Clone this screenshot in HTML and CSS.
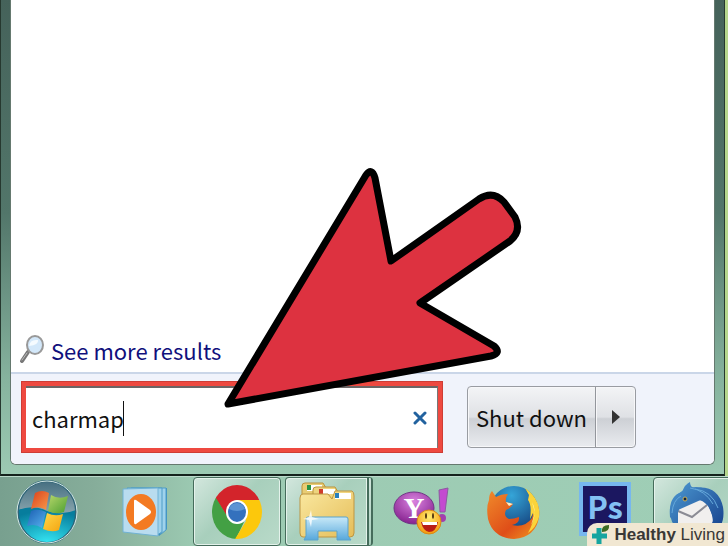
FILE: index.html
```
<!DOCTYPE html>
<html lang="en">
<head>
    <meta charset="UTF-8">
    <meta name="viewport" content="width=device-width, initial-scale=1.0">
    <title>Start Menu</title>
    <link rel="stylesheet" href="styles.css">
</head>
<body>
    <main class="start-frame">
        <div class="start-menu">
            <div class="results">
                <a class="more-link" href="#results">
                    <svg width="26" height="30" viewBox="0 0 26 30" aria-hidden="true">
                        <path d="M9 17 L3 26" stroke="#777" stroke-width="4" stroke-linecap="round"/>
                        <path d="M8 18 L3 25" stroke="#bbb" stroke-width="1" stroke-linecap="round"/>
                        <ellipse cx="16" cy="10" rx="8" ry="9" fill="#d3e8fa" stroke="#999" stroke-width="2"/>
                        <path d="M10 11 Q11 4 19 5 Q20 10 10 11Z" fill="#f5fbff"/>
                    </svg>
                    <span>See more results</span>
                </a>
            </div>
            <div class="search-row">
                <div class="search-box">
                    <div class="search-inner">
                        <input class="search-input" type="text" value="charmap" aria-label="Search programs and files">
                        <span class="caret"></span>
                        <button class="clear-btn" type="button" aria-label="Clear search">
                            <svg width="14" height="16" viewBox="0 0 14 16"><path d="M2 3 L12 13 M12 3 L2 13" stroke="#22629f" stroke-width="3" stroke-linecap="round"/></svg>
                        </button>
                    </div>
                </div>
                <div class="shutdown">
                    <button class="shutdown-btn" type="button">Shut down</button>
                    <button class="shutdown-more" type="button" aria-label="More power options">
                        <svg width="8" height="14" viewBox="0 0 8 14"><path d="M0 0 L8 7 L0 14Z" fill="#333"/></svg>
                    </button>
                </div>
            </div>
        </div>
    </main>

    <nav class="taskbar">
        <button class="orb" type="button" aria-label="Start">
            <svg width="62" height="64" viewBox="0 0 62 64">
                <defs>
                    <linearGradient id="orbTop" x1="0" y1="0" x2="0" y2="1"><stop offset="0" stop-color="#456e80"/><stop offset="1" stop-color="#c7d8d8"/></linearGradient>
                    <radialGradient id="orbLow" cx=".5" cy="1" r=".9"><stop offset="0" stop-color="#35e7f4"/><stop offset="1" stop-color="#077d9d"/></radialGradient>
                    <linearGradient id="wRed" x1="0" y1="0" x2="1" y2="1"><stop offset="0" stop-color="#d9401c"/><stop offset="1" stop-color="#f99a4a"/></linearGradient>
                    <linearGradient id="wGreen" x1="0" y1="0" x2="1" y2="1"><stop offset="0" stop-color="#b6d66a"/><stop offset="1" stop-color="#4b9e31"/></linearGradient>
                    <linearGradient id="wBlue" x1="0" y1="0" x2="1" y2="1"><stop offset="0" stop-color="#1b5fb2"/><stop offset="1" stop-color="#58b4f0"/></linearGradient>
                    <linearGradient id="wYellow" x1="0" y1="0" x2="1" y2="1"><stop offset="0" stop-color="#ffd84a"/><stop offset="1" stop-color="#f4a30f"/></linearGradient>
                </defs>
                <ellipse cx="31" cy="32" rx="29" ry="31" fill="url(#orbTop)"/>
                <path d="M2 30 Q18 24 31 31 Q46 36 60 30 Q61 48 47 58 Q31 68 15 58 Q1 48 2 30Z" fill="url(#orbLow)"/>
                <ellipse cx="31" cy="32" rx="29" ry="31" fill="none" stroke="#2d6477" stroke-width="2"/>
                <ellipse cx="31" cy="32" rx="30" ry="31" fill="none" stroke="#d7e9e6"/>
                <path d="M19 13 Q26 9 33 13 L30 30 Q23 25 15 29Z" fill="url(#wRed)"/>
                <path d="M35 15 Q43 20 52 16 L48 32 Q40 35 32 31Z" fill="url(#wGreen)"/>
                <path d="M15 31 Q22 28 30 32 L26 48 Q19 43 11 46Z" fill="url(#wBlue)"/>
                <path d="M31 33 Q39 37 47 34 L43 50 Q36 53 27 49Z" fill="url(#wYellow)"/>
            </svg>
        </button>

        <button class="task" type="button" aria-label="Media Player">
            <svg width="48" height="52" viewBox="0 0 48 52">
                <path d="M12 2 H46 V43 L38 50 Z" fill="#3c8fc0"/>
                <path d="M10 2 H45 V44 L40 48Z" fill="#9fd2ec" stroke="#4f9cc6"/>
                <path d="M6 2 H41 V46 L36 49Z" fill="#9fd2ec" stroke="#4f9cc6"/>
                <path d="M2 3 L37 2 V50 L2 46Z" fill="#b9dcef" stroke="#70b2d4"/>
                <ellipse cx="20" cy="26" rx="15" ry="18" fill="#f37a22"/>
                <path d="M13 15 Q13 13 15 14 L29 24 Q31 26 29 28 L15 38 Q13 39 13 36Z" fill="#fff"/>
            </svg>
        </button>

        <button class="task task-open" type="button" aria-label="Chrome">
            <svg width="50" height="54" viewBox="0 0 50 54">
                <defs><clipPath id="disc"><ellipse cx="25" cy="27" rx="25" ry="27"/></clipPath></defs>
                <g clip-path="url(#disc)">
                    <path d="M0 0 H50 V15 H25 L14 30 L4 14Z" fill="#d3242b"/>
                    <path d="M4 13 L15 31 L25 39 L32 37 L23 56 H0 V13Z" fill="#43a044"/>
                    <path d="M25 15 H50 V54 H23 L34 36Z" fill="#fcc80c"/>
                </g>
                <ellipse cx="25" cy="27" rx="11" ry="12" fill="#fff"/>
                <ellipse cx="25" cy="27" rx="9" ry="10" fill="#3471bd"/>
                <path d="M17 24 Q19 18 25 18 Q31 18 33 24 Q25 28 17 24Z" fill="#5c94d3"/>
            </svg>
        </button>

        <button class="task task-open task-stack" type="button" aria-label="File Explorer">
            <svg width="56" height="60" viewBox="0 0 56 60">
                <defs>
                    <linearGradient id="folder" x1="0" y1="0" x2="1" y2="1"><stop offset="0" stop-color="#fae8a0"/><stop offset="1" stop-color="#e5bd58"/></linearGradient>
                    <linearGradient id="tray" x1="0" y1="0" x2="0" y2="1"><stop offset="0" stop-color="#c8e9f8"/><stop offset="1" stop-color="#57a8dc"/></linearGradient>
                </defs>
                <path d="M3 16 V4 Q3 1 6 1 H24 L27 6 V20Z" fill="#e8cc74" stroke="#b9933c"/>
                <path d="M8 3 H23 V9 H8Z" fill="#fff"/><path d="M8 3 H12 V8 H8Z" fill="#279343"/>
                <path d="M14 18 V8 Q14 5 17 5 H36 L39 10 H51 V20Z" fill="#eed47e" stroke="#b9933c"/>
                <path d="M20 7 H36 V12 H20Z" fill="#fff"/><path d="M20 7 H24 V12 H20Z" fill="#cf3c2c"/>
                <path d="M1 16 Q1 12 4 12 H29 L33 17 L36 9 H53 Q55 10 55 14 V51 Q55 55 51 55 H4 Q1 55 1 51Z" fill="url(#folder)" stroke="#bd9542"/>
                <path d="M36 11 H52 V17 H36Z" fill="#fff"/><path d="M36 11 H40 V16 H36Z" fill="#287fbc"/>
                <path d="M7 37 Q7 35 9 35 H47 Q49 35 49 37 V54 L52 58 H38 V49 H19 V58 H5 L7 54Z" fill="url(#tray)" stroke="#5aa3cc"/>
                <path d="M12 28 L13 35 L20 37 L13 38 L12 45 L10 38 L4 37 L10 35Z" fill="#fff" opacity=".8"/>
            </svg>
        </button>

        <button class="task" type="button" aria-label="Yahoo Messenger">
            <svg width="56" height="50" viewBox="0 0 56 50">
                <defs><radialGradient id="purple" cx=".5" cy=".3" r=".7"><stop offset="0" stop-color="#d983df"/><stop offset="1" stop-color="#86228f"/></radialGradient>
                <radialGradient id="smile" cx=".5" cy=".3" r=".7"><stop offset="0" stop-color="#ffed71"/><stop offset="1" stop-color="#f5980c"/></radialGradient></defs>
                <ellipse cx="21" cy="21" rx="20" ry="16" fill="url(#purple)" stroke="#6f3685"/>
                <text x="21" y="31" class="yahoo-y">Y</text>
                <path d="M46 3 L55 1 L52 25 L47 25Z" fill="#c34ad0" stroke="#8d5aa0"/>
                <circle cx="49" cy="31" r="4" fill="#a23fae"/>
                <circle cx="36" cy="35" r="12" fill="url(#smile)" stroke="#d98b15"/>
                <path d="M28 35 H45 Q43 45 36 45 Q30 44 28 35Z" fill="#b91d15"/>
                <path d="M29 35 H44 V38 H30Z" fill="#fff"/>
                <ellipse cx="33" cy="29" rx="1" ry="3" fill="#50330d"/><ellipse cx="40" cy="29" rx="1" ry="3" fill="#50330d"/>
            </svg>
        </button>

        <button class="task" type="button" aria-label="Firefox">
            <svg width="54" height="54" viewBox="0 0 54 54">
                <defs><radialGradient id="globe" cx=".45" cy=".2" r=".8"><stop offset="0" stop-color="#35a5d8"/><stop offset="1" stop-color="#123c78"/></radialGradient>
                <linearGradient id="fox" x1="0" y1="0" x2="1" y2="1"><stop offset="0" stop-color="#f08a2b"/><stop offset=".6" stop-color="#df4e18"/><stop offset="1" stop-color="#f39b20"/></linearGradient></defs>
                <circle cx="28" cy="25" r="24" fill="url(#globe)"/>
                <path d="M3 15 Q3 9 6 6 L10 12 Q15 9 22 9 Q19 13 20 17 L27 19 Q25 23 20 25 Q17 31 23 34 Q28 34 33 32 Q34 38 26 40 Q39 43 46 33 Q50 20 42 7 Q55 17 53 32 Q50 52 28 54 Q7 53 2 34 Q0 22 3 15Z" fill="url(#fox)"/>
                <path d="M39 3 Q55 14 53 32 Q50 43 42 48 Q49 35 47 28 L44 34 Q46 20 42 15 L43 10Z" fill="#fbd43a"/>
                <path d="M46 17 L49 28 L45 40 Q52 28 46 17Z" fill="#fff3a0"/>
                <path d="M20 17 L27 19 L23 21Z" fill="#fff0c6"/>
            </svg>
        </button>

        <button class="task" type="button" aria-label="Photoshop">
            <svg class="raised" width="52" height="54" viewBox="0 0 52 54">
                <path d="M0 0 H52 V54 H0Z" fill="#77b7ef"/>
                <path d="M4 4 H48 V50 H4Z" fill="#1b1760"/>
                <text x="26" y="37" class="ps-text">Ps</text>
            </svg>
        </button>

        <button class="task task-open" type="button" aria-label="Thunderbird">
            <svg class="raised" width="56" height="56" viewBox="0 0 56 56">
                <defs><linearGradient id="blue" x1="0" y1="0" x2="1" y2="1"><stop offset="0" stop-color="#4e9bd3"/><stop offset="1" stop-color="#123b88"/></linearGradient></defs>
                <ellipse cx="27" cy="31" rx="26" ry="25" fill="url(#blue)"/>
                <path d="M9 29 L36 17 L45 38 L38 52 H18 L9 45Z" fill="#f1efee"/>
                <path d="M9 30 L23 36 L38 24" fill="none" stroke="#8b8b94" stroke-width="2"/>
                <path d="M1 36 Q-1 15 13 11 Q16 3 21 1 Q21 6 25 7 Q49 3 54 26 Q57 46 42 55 Q47 37 39 25 Q30 15 23 21 Q17 25 12 25 Q7 31 9 43Z" fill="url(#blue)"/>
                <path d="M21 7 Q36 9 44 23 M26 8 Q43 10 49 27 M3 32 Q4 19 12 15" fill="none" stroke="#66a9db"/>
                <circle cx="16" cy="18" r="2" fill="#172439" stroke="#c7b05b"/>
            </svg>
        </button>
    </nav>

    <svg class="pointer" width="302" height="246" viewBox="222 164 302 246" aria-hidden="true">
        <path d="M228 404 L366 175 Q372 167 375 178 L391 261 L479 199 Q493 190 504 202 L515 217 Q522 231 510 241 L420 303 L494 346 Q502 353 491 356Z" fill="#dd3240" stroke="#000" stroke-width="7" stroke-linejoin="round"/>
    </svg>

    <div class="badge">
        <svg width="20" height="22" viewBox="0 0 20 22" aria-hidden="true">
            <path d="M8 4 V20 M1 12 H16" stroke="#16a5a0" stroke-width="5"/>
            <path d="M11 8 Q10 1 18 1 Q19 8 11 8Z" fill="#3c6c23"/>
        </svg>
        <span><strong>Healthy</strong> Living</span>
    </div>
</body>
</html>
```
FILE: styles.css
```
* { box-sizing: border-box; }
body { margin: 0; min-height: 100vh; display: flex; flex-direction: column; position: relative; overflow: hidden; background: #b5d68c; font-family: "Noto Sans CJK SC", "Open Sans", sans-serif; font-size: 22px; line-height: 32px; }
button { margin: 0; padding: 0; border: none; background: none; font: inherit; color: inherit; cursor: pointer; }
svg { display: block; flex: none; }

.start-frame { flex: 1; display: flex; margin-right: 3px; padding: 0 9px 9px 9px; border-left: 1px solid #26382f; border-right: 1px solid #26382f; border-bottom: 2px solid #14221c; background: linear-gradient(#45625a, #52766a 45%, #86b39e 80%, #9ccab3); }
.start-menu { flex: 1; display: flex; flex-direction: column; border: 1px solid #65796f; border-top: none; border-radius: 0 0 6px 6px; background: #fff; overflow: hidden; }
.results { flex: 1; display: flex; align-items: flex-end; padding: 0 8px 6px; }
.more-link { display: flex; align-items: center; gap: 6px; color: #10107c; text-decoration: none; }

.search-row { display: flex; align-items: center; gap: 24px; padding: 7px 78px 11px 10px; border-top: 2px solid #cad6e8; background: #f0f3fb; }
.search-box { flex: 1; border: 5px solid #ee4940; outline: 1px solid #ce3d35; outline-offset: -1px; background: #fff; }
.search-inner { display: flex; align-items: center; height: 62px; padding: 0 10px 0 6px; border-top: 2px solid #6b6565; border-right: 1px solid #777; }
.search-input { width: 91px; padding: 0; border: none; outline: none; background: none; font: inherit; color: #111; }
.caret { width: 1px; height: 35px; background: #111; }
.clear-btn { margin-left: auto; }

.shutdown { display: flex; width: 169px; height: 62px; border: 1px solid #999ca2; border-radius: 4px; background: linear-gradient(#f3f4f6, #dfe1e5 50%, #cdd0d5 53%, #e9ebef); box-shadow: inset 0 0 0 1px #f7f7f9; color: #111; }
.shutdown-btn { flex: 1; white-space: nowrap; }
.shutdown-more { display: flex; align-items: center; justify-content: center; width: 40px; border-left: 1px solid #93969c; box-shadow: inset 1px 0 #f7f7f9; }

.taskbar { display: flex; gap: 4px; height: 70px; border-top: 1px solid #bad9ca; background: linear-gradient(90deg, #78a08f, #86ad9a 13%, #9ccab2 27%, #9fceb6); overflow: hidden; }
.orb { flex: none; width: 97px; padding-left: 16px; }
.task { flex: none; display: flex; align-items: center; justify-content: center; width: 88px; }
.task-open { border: 1px solid #456c5b; border-radius: 4px; background: linear-gradient(135deg, #d3e7de, #a8cfbc 45%, #b9dac9); box-shadow: inset 0 0 0 1px #e4f2eb; }
.task-stack { border-right: 6px double #456c5b; }
.raised { margin-bottom: 6px; }
.yahoo-y { font: bold 29px "Liberation Serif", serif; fill: #fff; text-anchor: middle; }
.ps-text { font: bold 31px "Noto Sans CJK SC", sans-serif; fill: #83c1f4; text-anchor: middle; }

.pointer { position: absolute; left: 222px; bottom: 136px; pointer-events: none; }
.badge { position: absolute; right: 0; bottom: 0; display: flex; align-items: center; gap: 3px; height: 23px; padding: 0 3px 0 4px; border-radius: 10px 0 0 0; background: #f1e7d2; color: #393836; font: 17px "Liberation Sans", sans-serif; white-space: nowrap; }
```
